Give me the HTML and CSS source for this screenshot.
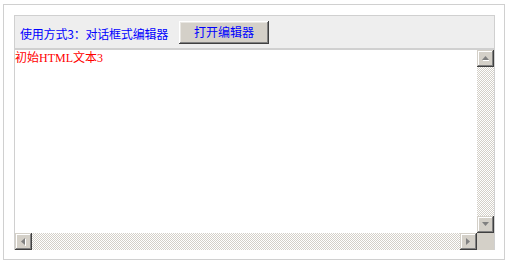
FILE: index.html
```html
<!DOCTYPE html>
<html lang="zh-CN">
<head>
    <meta charset="UTF-8">
    <title>对话框式编辑器</title>
    <link rel="stylesheet" href="styles.css">
</head>
<body>
    <div class="frame">
        <div class="editor-box">
            <div class="toolbar">
                <span class="label">使用方式3：对话框式编辑器</span>
                <button class="btn" type="button">打开编辑器</button>
            </div>
            <div class="editor">
                <div class="content">初始HTML文本3</div>
                <div class="vbar">
                    <div class="sb-btn">
                        <svg width="7" height="5" viewBox="0 0 7 5"><polygon points="3.5,0 7,4 0,4" fill="#808080"/><rect x="1" y="4" width="6" height="1" fill="#fff"/></svg>
                    </div>
                    <div class="track"></div>
                    <div class="sb-btn">
                        <svg width="7" height="5" viewBox="0 0 7 5"><polygon points="0,0 7,0 3.5,4" fill="#808080"/></svg>
                    </div>
                </div>
                <div class="hbar">
                    <div class="sb-btn">
                        <svg width="5" height="8" viewBox="0 0 5 8"><polygon points="4,0 4,7 0,3.5" fill="#808080"/><rect x="4" y="1" width="1" height="7" fill="#fff"/></svg>
                    </div>
                    <div class="track"></div>
                    <div class="sb-btn">
                        <svg width="5" height="8" viewBox="0 0 5 8"><polygon points="0,0 4,3.5 0,7" fill="#808080"/></svg>
                    </div>
                </div>
                <div class="corner"></div>
            </div>
        </div>
    </div>
</body>
</html>
```

FILE: styles.css
```css
body {
    margin: 0;
    padding: 4px 0 0 3px;
    background: #fff;
    font-family: "Noto Sans CJK SC", sans-serif;
}
.frame {
    width: 481px;
    height: 244px;
    border: 1px solid #d0d0d0;
    padding: 10px 9px 0 10px;
}
.editor-box {
    border: 1px solid #d0d0d0;
    border-bottom: 0;
}
.toolbar {
    height: 32px;
    background: #eeeeee;
    border-bottom: 2px solid #d0d0d0;
    display: flex;
    align-items: center;
    padding-left: 5px;
    gap: 11px;
}
.label {
    color: #0000ff;
    font-size: 12px;
    line-height: 16px;
    margin-top: 4px;
    letter-spacing: -0.2px;
}
.btn {
    width: 90px;
    height: 23px;
    padding: 0 0 2px;
    border: 0;
    background: #d4d0c8;
    color: #0000ff;
    font-family: "Noto Sans CJK SC", sans-serif;
    font-size: 12px;
    box-shadow: inset -1px -1px #404040, inset 1px 1px #ffffff, inset -2px -2px #808080, inset 2px 2px #e8e6e2;
}
.editor {
    display: grid;
    grid-template-columns: 1fr 17px;
    grid-template-rows: 183px 17px;
    height: 200px;
}
.content {
    color: #ff0000;
    font-family: "Liberation Serif", "Noto Sans CJK SC", serif;
    font-size: 12px;
    line-height: 15px;
    padding-top: 1px;
    overflow: hidden;
}
.vbar, .hbar {
    display: flex;
}
.vbar {
    flex-direction: column;
}
.track {
    flex: 1;
    background-color: #ffffff;
    background-image: conic-gradient(#d4d0c8 25%, #ffffff 0 50%, #d4d0c8 0 75%, #ffffff 0);
    background-size: 2px 2px;
}
.sb-btn {
    width: 17px;
    height: 17px;
    flex: none;
    background: #d4d0c8;
    display: flex;
    align-items: center;
    justify-content: center;
    box-shadow: inset -1px -1px #404040, inset 1px 1px #d4d0c8, inset -2px -2px #808080, inset 2px 2px #ffffff;
}
.corner {
    background: #d4d0c8;
}
```
